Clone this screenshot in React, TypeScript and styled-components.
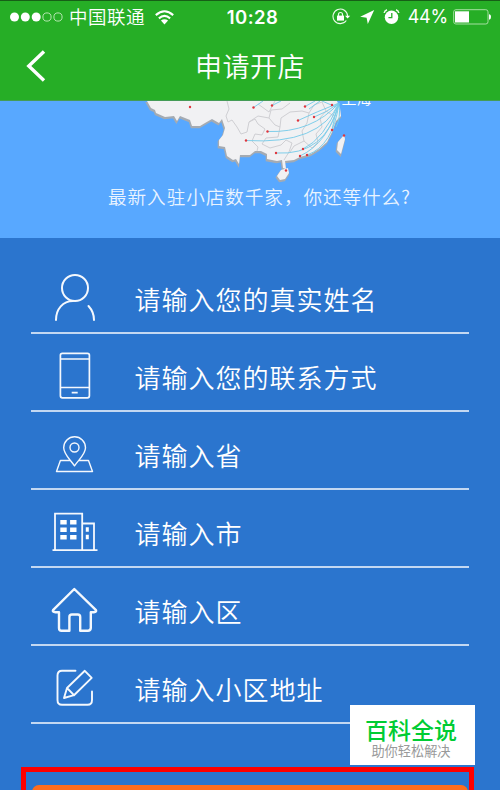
import React from "react";
import styled, { createGlobalStyle } from "styled-components";

const GlobalStyle = createGlobalStyle`
  * { box-sizing: border-box; }
  body { margin: 0; overflow: hidden; background: #2b75ce; }
  svg { display: block; }
`;

const Screen = styled.div`
  width: 500px;
  height: 790px;
  position: relative;
  overflow: hidden;
  background: #2b75ce;
  color: #fff;
  font-family: "Noto Sans CJK SC", sans-serif;
  display: flex;
  flex-direction: column;
`;

const Header = styled.header`
  flex: none;
  height: 101px;
  background: #26ae26;
  border-top: 1px solid #175f17;
  border-bottom: 1px solid #459b57;
`;

const StatusBar = styled.div`
  height: 32px;
  display: grid;
  grid-template-columns: 1fr 60px 1fr;
  align-items: center;
  padding: 0 9px 0 10px;
`;

const StatusGroup = styled.div<{ $end?: boolean }>`
  display: flex;
  align-items: center;
  justify-content: ${(p) => (p.$end ? "flex-end" : "flex-start")};
`;

const Carrier = styled.span`
  margin: 0 10px 0 6px;
  font-size: 18.5px;
  line-height: 28px;
  padding-bottom: 2px;
  font-weight: 350;
  letter-spacing: 0.5px;
  white-space: nowrap;
`;

const Clock = styled.span`
  font: 600 18.5px/30px Inter, sans-serif;
  letter-spacing: 0.4px;
  text-align: center;
  white-space: nowrap;
  margin-left: 4px;
`;

const Percent = styled.span`
  font: 400 18px/30px Inter, sans-serif;
  letter-spacing: -0.2px;
  margin: 0 5px 0 8px;
`;

const NavBar = styled.div`
  height: 66px;
  display: grid;
  grid-template-columns: 100px 1fr 100px;
  align-items: center;
`;

const BackButton = styled.button`
  border: 0;
  padding: 0 0 0 25px;
  background: none;
`;

const Title = styled.h1`
  margin: 0;
  padding-bottom: 1px;
  font-size: 27px;
  line-height: 40px;
  font-weight: 350;
  letter-spacing: 0.5px;
  text-align: center;
`;

const Hero = styled.section`
  flex: none;
  height: 137px;
  background: #58a8ff;
`;

const MapArt = styled.svg`
  width: 500px;
  height: 82px;
`;

const Slogan = styled.p`
  margin: 0 0 0 108px;
  font-size: 18.6px;
  line-height: 26px;
  font-weight: 350;
  letter-spacing: 0.95px;
  white-space: nowrap;
  opacity: 0.88;
`;

const Form = styled.form`
  flex: none;
  padding: 18px 31px 0 31px;
`;

const Field = styled.label`
  height: 78px;
  display: flex;
  align-items: center;
  border-bottom: 2px solid #c3d8f2;
`;

const FieldIcon = styled.svg`
  width: 104px;
  height: 76px;
  flex: none;
  fill: none;
  stroke: #f4f8fd;
  stroke-linejoin: round;
`;

const FieldText = styled.span`
  font-size: 26px;
  line-height: 40px;
  font-weight: 350;
  letter-spacing: 1px;
  padding-top: 10px;
  margin-left: -0.5px;
`;

const Highlight = styled.div`
  flex: none;
  width: 453px;
  height: 80px;
  margin: 43px 0 0 21px;
  border: 5px solid #f00;
  padding: 13px 1px 0 6px;
`;

const Submit = styled.button`
  display: block;
  width: 100%;
  height: 60px;
  border: 0;
  border-radius: 7px;
  background: #ff6d1e;
`;

const Watermark = styled.aside`
  position: absolute;
  left: 350px;
  top: 705px;
  width: 125px;
  height: 60px;
  padding-right: 3px;
  background: #fff;
  text-align: center;
  white-space: nowrap;
`;

const Brand = styled.div`
  font-size: 23px;
  line-height: 34px;
  padding-top: 7px;
  height: 36px;
  font-weight: 500;
  color: #00cc33;
`;

const BrandNote = styled.div`
  font-size: 13.2px;
  line-height: 20px;
  color: #999;
`;

const cities: [number, number][] = [
  [190, 107], [253.5, 107.5], [272, 105.5], [305, 106.5], [332, 105], [314, 117],
  [298, 120.5], [246, 140.5], [267.5, 131.5], [332, 130], [276, 153], [303, 149],
  [300, 156], [307, 155], [286, 170.5], [344, 135.5],
];

const mainland =
  "M147 101 L151 108 L155 110 L156 113 L165 117 L174 116 L177 121 L180 116 L190 120 L192 126 L200 126 L205 123 L212 119 L219 123 L222 119 L225 128 L223 135 L219 140 L219 146 L225 147 L227 156 L233 160 L236 159 L239 164 L240 155 L250 155 L255 151 L261 151 L267 154 L267 159 L277 161 L282 160 L283 168 L286 169 L285 161 L294 160 L300 157 L311 154 L319 149 L327 142 L332 132 L336 121 L341 116 L340 108 L337 101 Z";
const hainan = "M281 170 L288 168 L289 173 L285 179 L280 180 L277 176 Z";
const taiwan = "M344 135 L345 139 L341 154 L337 150 L338 142 Z";

const ChinaMap = () => (
  <MapArt viewBox="0 101 500 82" fill="none">
    <g fill="#a5abb2" stroke="#a5abb2" strokeWidth="1.4" transform="translate(-.6 1.6)">
      <path d={mainland} />
      <path d={hainan} />
      <path d={taiwan} />
    </g>
    <g fill="#f1f1f3">
      <path d={mainland} />
      <path d={hainan} />
      <path d={taiwan} />
    </g>
    <path
      stroke="#cfcfd3"
      strokeWidth="1"
      d="M227 101 L229 109 L226 116 L228 122 L232 120 L237 127 L241 134 L247 132 L249 122 L255 119 L258 124 L265 129 L262 135 L255 134 L252 141 L258 147 L257 151 M258 104 L269 112 L275 101 M249 122 L258 116 L269 118 L275 125 L280 127 L278 137 L266 138 L262 144 L270 148 L281 145 L286 140 L292 143 L289 152 L284 160 M269 118 L271 110 L282 109 L290 103 M280 127 L281 118 L290 112 L302 111 L309 113 L307 123 L302 131 L304 141 L294 146 L290 152 M309 113 L314 105 L322 102 L326 111 L334 116 M326 111 L320 118 L322 127 L316 134 L318 142 L312 148 L304 141"
    />
    <g stroke="#74cbea" strokeWidth="1" opacity=".9">
      <path d="M339 103 Q312 133 267.5 131.5 M339 103 Q320 145 246 140.5 M339 103 Q326 156 276 153 M339 103 Q326 113 314 117 M339 103 Q316 112 298 120.5 M339 103 Q324 139 303 149 M339 103 Q328 143 300 156 M339 103 Q333 146 307 155 M339 103 Q334 117 332 130 M339 103 Q341 118 336 127" />
      <path d="M253.5 107.5 L263 101 M272 105.5 L281 101 M305 106.5 L315 101 M322 101 L336 107 M309 109 L320 101" />
    </g>
    {cities.map(([x, y]) => (
      <circle key={`${x}-${y}`} cx={x} cy={y} r="1.2" fill="#df353d" />
    ))}
    <text x="341.5" y="104" fill="#fff" fontSize="15" fontWeight="350">上海</text>
  </MapArt>
);

const fields = [
  {
    text: "请输入您的真实姓名",
    icon: (
      <g strokeWidth="2" strokeLinecap="round">
        <circle cx="44" cy="32" r="13" />
        <path d="M25 64 C25 53 32 45 42 45 M57.5 50 Q63 56 63 64" />
      </g>
    ),
  },
  {
    text: "请输入您的联系方式",
    icon: (
      <g strokeWidth="1.7">
        <rect x="29.4" y="19.3" width="29" height="44.5" rx="2" />
        <path d="M29.7 25 H58.2 M29.7 53.5 H58.2 M40.7 58.6 H46.7" />
      </g>
    ),
  },
  {
    text: "请输入省",
    icon: (
      <g strokeWidth="1.4" transform="translate(0 1.8)">
        <path d="M43.5 52 C39 45.5 32.7 40.5 32.7 34 A10.9 11 0 0 1 54.5 34 C54.5 40.5 48 45.5 43.5 52 Z M39 46.7 H29.4 L25.5 57.7 H61.5 L57.5 46.7 H48" />
        <circle cx="43.5" cy="33.7" r="4.5" />
      </g>
    ),
  },
  {
    text: "请输入市",
    icon: (
      <g strokeWidth="1.8" transform="translate(0 2)">
        <path strokeLinejoin="miter" d="M24 58 V21.7 H51.2 V58 M51.2 31.5 H63 V58 M21.5 58.2 H66.5" />
        <path
          fill="#fff"
          stroke="none"
          d="M29.3 28h6.4v4.5h-6.4z M39.1 28h6.4v4.5h-6.4z M29.3 35.5h6.4v4.5h-6.4z M39.1 35.5h6.4v4.5h-6.4z M29.3 43h6.4v4.5h-6.4z M39.1 43h6.4v4.5h-6.4z M54.8 35.3h3v4.5h-3z M54.8 42.7h3v4.5h-3z"
        />
      </g>
    ),
  },
  {
    text: "请输入区",
    icon: (
      <path
        strokeWidth="2.4"
        transform="translate(0 2)"
        d="M43.3 19 L65 40.2 Q66 42.5 59.8 42.3 V58 Q59.5 60.7 57 60.7 H49.2 V47 Q49.2 44.5 46.7 44.5 H41 Q38.4 44.5 38.4 47 V60.7 H30.5 Q28 60.7 28 58 V42.3 Q20.8 42.5 22 40.2 Z"
      />
    ),
  },
  {
    text: "请输入小区地址",
    icon: (
      <g strokeWidth="1.9" strokeLinecap="round" transform="translate(0 1.5)">
        <path d="M44.5 23.2 H31 Q26.5 23.2 26.5 28 V52.5 Q26.5 57.3 31 57.3 H56.5 Q61 57.3 61 52.5 V44" />
        <path d="M33 50.5 L36 40.5 L53.8 23.3 L60.7 30.4 L43 47.7 Z M36 40.5 L43 47.7" />
      </g>
    ),
  },
];

const SignalDots = () => (
  <svg width="53" height="12" viewBox="0 0 53 12" fill="#fff">
    <circle cx="4.5" cy="6" r="4.5" />
    <circle cx="15.3" cy="6" r="4.5" />
    <circle cx="26.2" cy="6" r="4.5" />
    <g fill="none" stroke="#b5e6b1" strokeWidth="1">
      <circle cx="37" cy="6" r="4.1" />
      <circle cx="48" cy="6" r="4.1" />
    </g>
  </svg>
);

const Wifi = () => (
  <svg width="19" height="15" viewBox="0 0 19 15" fill="none" stroke="#fff" strokeWidth="2.1">
    <path d="M.8 5.1 Q9.5 -2.6 18.2 5.1 M3.9 8.4 Q9.5 3.5 15.1 8.4" />
    <path d="M5.9 10.6 Q9.5 7.8 13.1 10.6 L9.5 14.4 Z" fill="#fff" stroke="none" />
  </svg>
);

const StatusIcons = () => (
  <svg width="68" height="18" viewBox="333 8 68 18" fill="none" stroke="#eefbed">
    <path d="M347.3 20.5 A7.3 7.3 0 1 1 348.6 16" strokeWidth="1.1" />
    <path d="M346 15.8 H351.2 L348.6 18.6 Z" fill="#fff" stroke="none" />
    <rect x="338" y="15.6" width="7" height="5" fill="#fff" stroke="none" />
    <path d="M339.5 16 V14.5 A2 2 0 0 1 343.5 14.5 V16" strokeWidth="1.2" />
    <path d="M375.2 10 L368.8 24 L367.6 17.7 L361.2 16.8 Z" fill="#fff" stroke="none" />
    <circle cx="392.5" cy="17.2" r="6.7" fill="#fff" stroke="none" />
    <path d="M385.2 13 Q385.5 10.5 388 9.8 M397 9.8 Q399.5 10.5 399.8 13" strokeWidth="1.5" />
    <path d="M392.8 13 V17.6 H389.4" stroke="#26ae26" strokeWidth="1.3" />
  </svg>
);

const Battery = () => (
  <svg width="38" height="16" viewBox="0 0 38 16">
    <rect x=".7" y=".7" width="34.3" height="14.3" rx="2.2" fill="none" stroke="#a4dfa0" />
    <rect x="2" y="2.3" width="14" height="11.2" fill="#fff" />
    <path d="M36 5.2 Q38 5.2 38 8 Q38 10.7 36 10.7 Z" fill="#fff" />
  </svg>
);

export default function App() {
  return (
    <>
      <GlobalStyle />
      <Screen>
        <Header>
          <StatusBar>
            <StatusGroup>
              <SignalDots />
              <Carrier>中国联通</Carrier>
              <Wifi />
            </StatusGroup>
            <Clock>10:28</Clock>
            <StatusGroup $end>
              <StatusIcons />
              <Percent>44%</Percent>
              <Battery />
            </StatusGroup>
          </StatusBar>
          <NavBar>
            <BackButton type="button" aria-label="返回">
              <svg width="22" height="34" viewBox="0 0 22 34" fill="none" stroke="#fff" strokeWidth="3.4">
                <path d="M19 2.5 L3.8 17 L19 31.5" />
              </svg>
            </BackButton>
            <Title>申请开店</Title>
          </NavBar>
        </Header>
        <Hero>
          <ChinaMap />
          <Slogan>最新入驻小店数千家，你还等什么?</Slogan>
        </Hero>
        <Form>
          {fields.map((field) => (
            <Field key={field.text}>
              <FieldIcon viewBox="0 0 104 76">{field.icon}</FieldIcon>
              <FieldText>{field.text}</FieldText>
            </Field>
          ))}
        </Form>
        <Highlight>
          <Submit type="button" aria-label="提交" />
        </Highlight>
        <Watermark>
          <Brand>百科全说</Brand>
          <BrandNote>助你轻松解决</BrandNote>
        </Watermark>
      </Screen>
    </>
  );
}
